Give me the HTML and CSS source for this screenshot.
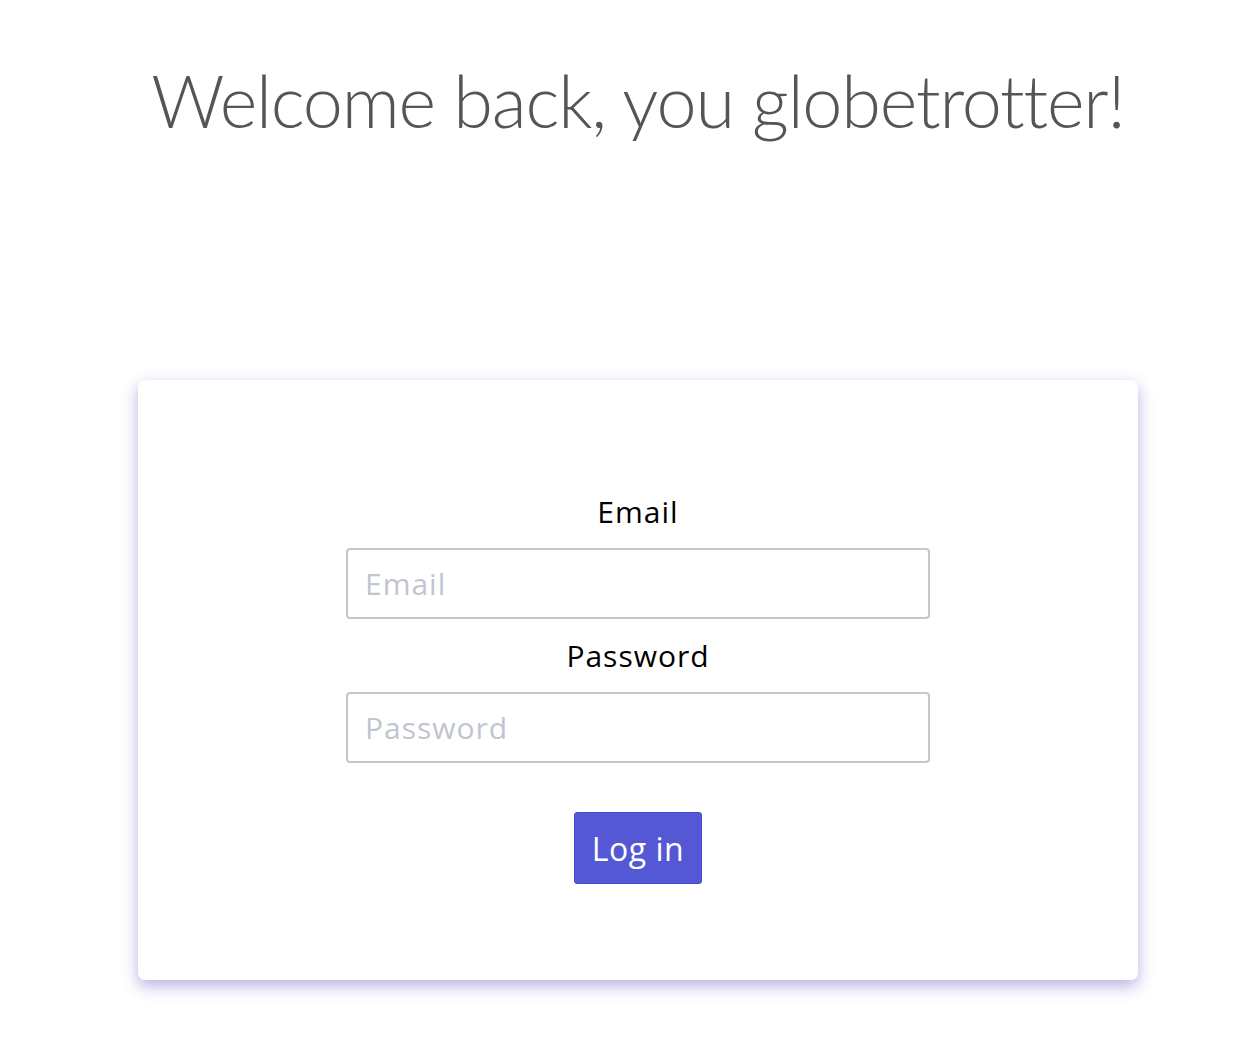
FILE: index.html
```html
<!DOCTYPE html>
<html lang="en">
<head>
<meta charset="utf-8">
<title>Log in</title>
<link rel="stylesheet" href="styles.css">
</head>
<body>
<main class="page">
  <h1 class="title">Welcome back, you globetrotter!</h1>
  <section class="card">
    <form class="form">
      <label class="label" for="email">Email</label>
      <input class="field" id="email" type="email" placeholder="Email">
      <label class="label" for="password">Password</label>
      <input class="field" id="password" type="password" placeholder="Password">
      <button class="btn" type="button">Log in</button>
    </form>
  </section>
</main>
</body>
</html>
```

FILE: styles.css
```css
html, body {
  margin: 0;
  padding: 0;
  background: #ffffff;
}
body {
  font-family: "Open Sans", "Lato", sans-serif;
}
.page {
  width: 1000px;
  margin-left: 138px;
  padding-bottom: 84px;
  display: flex;
  flex-direction: column;
  align-items: center;
}
.title {
  margin: 58px 0 0;
  font-family: "Lato", "Open Sans", sans-serif;
  font-size: 72px;
  font-weight: 300;
  letter-spacing: -1.2px;
  line-height: 84px;
  color: #555555;
  white-space: nowrap;
}
.card {
  margin-top: 238px;
  width: 1000px;
  height: 600px;
  box-sizing: border-box;
  background: #fff;
  border-radius: 7px;
  box-shadow: 0 6px 16px rgba(100, 80, 190, 0.45);
  display: flex;
  justify-content: center;
  padding-top: 112px;
}
.form {
  width: 584px;
  display: flex;
  flex-direction: column;
  align-items: center;
}
.label {
  font-size: 30px;
  line-height: 40px;
  letter-spacing: 1px;
  color: #000;
  margin-bottom: 16px;
}
.field {
  width: 584px;
  height: 71px;
  box-sizing: border-box;
  border: 2px solid #c3c7d1;
  border-radius: 4px;
  padding: 0 17px;
  font-family: inherit;
  font-size: 30px;
  letter-spacing: 1px;
  color: #333;
  margin-bottom: 17px;
  outline: none;
}
.field::placeholder {
  color: #c0c5d0;
}
.btn {
  margin-top: 32px;
  width: 128px;
  height: 72px;
  background: #5558d4;
  color: #fff;
  border: 1px solid #4a4dc9;
  border-radius: 3px;
  font-family: inherit;
  font-size: 32px;
  letter-spacing: 0.5px;
  padding: 0;
}
```
